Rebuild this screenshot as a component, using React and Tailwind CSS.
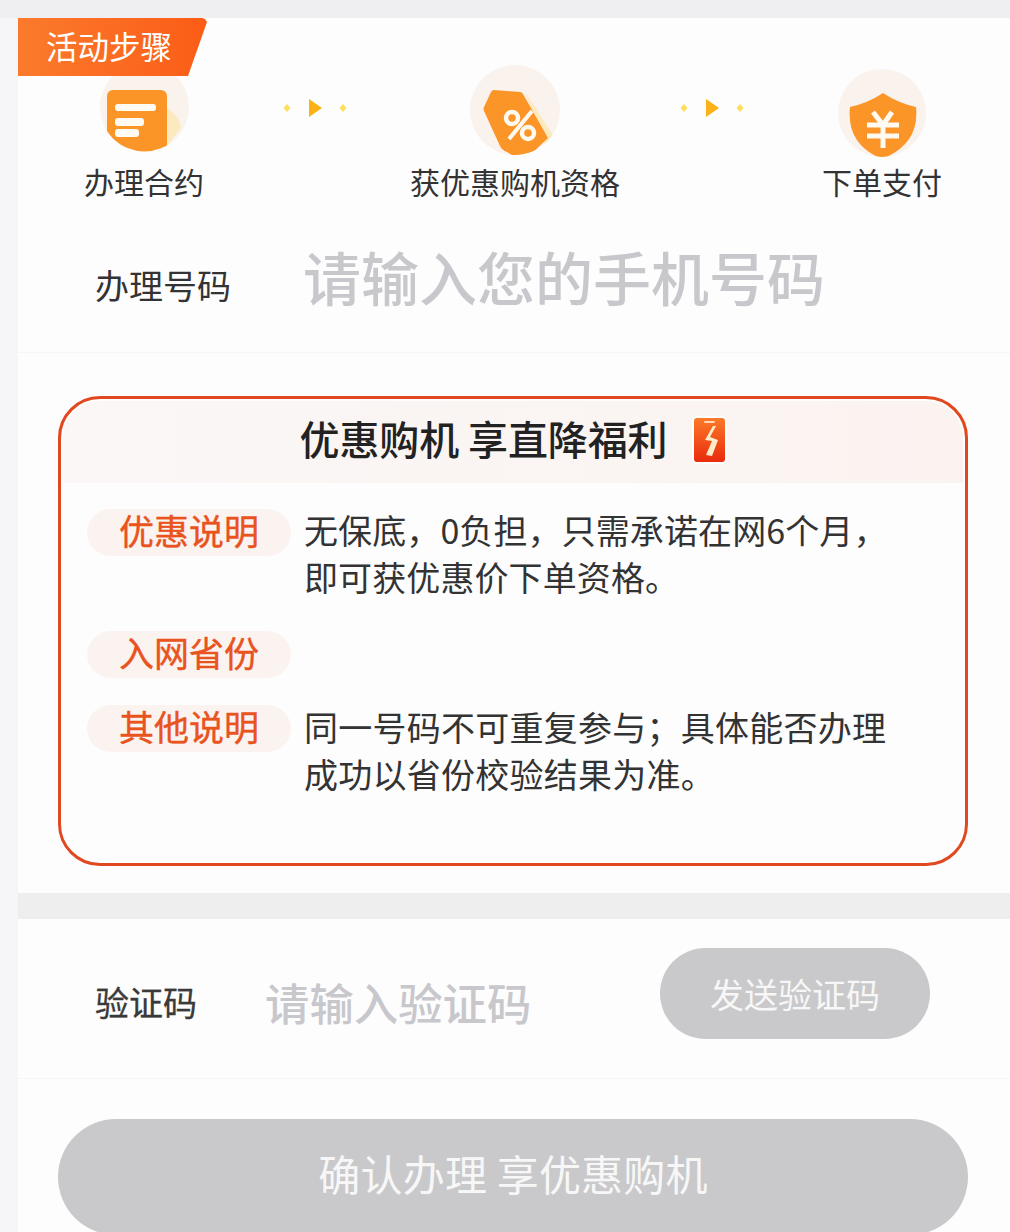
const FONT = "font-['Noto_Sans_CJK_SC','Noto_Sans',sans-serif]";

function DocIcon() {
  return (
    <svg width="100" height="99" viewBox="0 0 100 99">
      <defs>
        <clipPath id="c1"><circle cx="50.5" cy="45" r="44.5" /></clipPath>
      </defs>
      <circle cx="50.5" cy="45" r="44.5" fill="#faf3ed" />
      <g clipPath="url(#c1)">
        <path d="M73 46 Q86 54 87 66 L73 84 Z" fill="#fde9c0" />
        <rect x="13" y="28" width="60" height="80" rx="6" fill="#fb9527" />
        <rect x="21" y="42" width="41" height="7" rx="3" fill="#fffaf2" />
        <rect x="21" y="56" width="29" height="8" rx="3" fill="#fffaf2" />
        <rect x="21" y="67" width="24" height="8" rx="3" fill="#fffaf2" />
      </g>
    </svg>
  );
}

function TagIcon() {
  return (
    <svg width="100" height="99" viewBox="0 0 100 99">
      <defs>
        <clipPath id="c2"><circle cx="50" cy="48" r="45" /></clipPath>
      </defs>
      <circle cx="50" cy="48" r="45" fill="#faf3ed" />
      <g clipPath="url(#c2)">
        <path d="M60 30 L90 76 L80 84 Z" fill="#fde9c0" />
        <path d="M29 28 Q27 28 26 30 L19 45 Q18 47 19 49 L35 84 Q37 88 42 90 L58 100 L83 76 L58 32 Q57 30 55 30 Z" fill="#fb9527" />
      </g>
      <circle cx="47" cy="56" r="6" fill="none" stroke="#fffaf0" strokeWidth="4.5" />
      <circle cx="63" cy="71" r="6" fill="none" stroke="#fffaf0" strokeWidth="4.5" />
      <line x1="67" y1="49" x2="44" y2="77" stroke="#fffaf0" strokeWidth="4" />
    </svg>
  );
}

function ShieldIcon() {
  return (
    <svg width="100" height="99" viewBox="0 0 100 99">
      <defs>
        <clipPath id="c3"><circle cx="50" cy="51" r="44" /></clipPath>
      </defs>
      <circle cx="50" cy="51" r="44" fill="#faf3ed" />
      <g clipPath="url(#c3)">
        <path d="M51 31 Q36 41 18 45 Q14 82 50 97 Q88 82 84 45 Q66 41 51 31 Z" fill="#fb9527" />
      </g>
      <path d="M41 50 L51 63 L60 50 M51 63 V86 M35 63 H67 M35 74 H67" fill="none" stroke="#fffaf2" strokeWidth="5" />
    </svg>
  );
}

function Arrow({ className }) {
  return (
    <svg width="64" height="20" viewBox="0 0 64 20" className={className}>
      <path d="M4 6 L7.5 10 L4 14 L0.5 10 Z" fill="#fddf5e" />
      <path d="M26 1 L39 10 L26 19 Z" fill="#fcb116" />
      <path d="M60 6 L63.5 10 L60 14 L56.5 10 Z" fill="#fddf5e" />
    </svg>
  );
}

function Bolt() {
  return (
    <svg width="35" height="48" viewBox="0 0 35 48" className="shrink-0 mt-[4px]">
      <defs>
        <linearGradient id="bg" x1="0" y1="0" x2="0" y2="1">
          <stop offset="0" stopColor="#fb7a28" />
          <stop offset="1" stopColor="#ea2a0c" />
        </linearGradient>
      </defs>
      <rect x="0" y="0" width="35" height="48" rx="5" fill="#fff" />
      <rect x="2" y="2" width="31" height="44" rx="3" fill="url(#bg)" />
      <rect x="12" y="5" width="11" height="2" rx="1" fill="#ffd9b8" />
      <path d="M21 10 L13 24 L20 25 L14 39 L20 40 L26 24 L18 21 L24 10 Z" fill="#ffeccb" />
    </svg>
  );
}

function Pill({ children }) {
  return (
    <div className="h-[47px] w-[204px] rounded-full bg-[#fbf3f0] flex items-center justify-center pb-[7px] text-[35px] leading-[47px] text-[#e9531d] [-webkit-text-stroke:0.4px_#e9531d]">
      {children}
    </div>
  );
}

function Step({ icon, label, width }) {
  return (
    <div className={`flex flex-col items-center shrink-0 ${width}`}>
      {icon}
      <div className="text-[30px] leading-[40px] text-[#333333] whitespace-nowrap">{label}</div>
    </div>
  );
}

export default function App() {
  return (
    <div className={`${FONT} w-[1010px] h-[1232px] overflow-hidden bg-[#f6f6f8]`}>
      <div className="h-[18px] bg-[#efeff1]" />
      <div className="pl-[18px]">
        <section className="relative h-[875px] bg-[#fefdfe]">
          <div className="absolute left-0 top-0 w-[189px] h-[58px] pl-[28px] pb-[2px] flex items-center text-[31.5px] text-white leading-none whitespace-nowrap bg-gradient-to-r from-[#fb7a2c] to-[#fb5c16] [clip-path:polygon(0_0,184px_0,187px_1px,189px_4px,170px_58px,0_58px)]">
            活动步骤
          </div>

          <div className="flex items-start pt-[44px] pl-[66px]">
            <Step icon={<DocIcon />} label="办理合约" width="w-[120px]" />
            <Arrow className="mt-[36px] ml-[79px]" />
            <Step icon={<TagIcon />} label="获优惠购机资格" width="w-[210px] ml-[63px]" />
            <Arrow className="mt-[36px] ml-[60px]" />
            <Step icon={<ShieldIcon />} label="下单支付" width="w-[120px] ml-[78px]" />
          </div>

          <div className="flex items-start h-[152px] pl-[77px] border-b border-[#f6f5f7] whitespace-nowrap">
            <div className="mt-[64px] text-[34px] leading-[40px] text-[#333333]">办理号码</div>
            <div className="mt-[40px] ml-[72px] text-[58px] leading-[70px] font-medium text-[#c8c8cc]">请输入您的手机号码</div>
          </div>

          <div className="ml-[40px] mt-[43px] w-[910px] h-[470px] rounded-[42px] border-[3px] border-[#e0491f] p-[2px]">
            <div className="h-[82px] rounded-t-[36px] bg-gradient-to-r from-[#faf7f6] to-[#fbf3f0] flex items-center justify-center gap-[24px] pb-[8px] text-[40px] leading-none font-medium text-[#222222] whitespace-nowrap">
              <span className="tracking-[-0.1px]">优惠购机 享直降福利</span>
              <Bolt />
            </div>
            <div className="grid grid-cols-[204px_1fr] gap-x-[13px] pl-[24px] pt-[26px] text-[34px] leading-[47px] text-[#333333]">
              <Pill>优惠说明</Pill>
              <div className="-mt-[3px] mb-[3px] whitespace-nowrap tracking-[0.1px]">
                无保底，0负担，只需承诺在网6个月，
                <br />
                即可获优惠价下单资格。
              </div>
              <div className="mt-[28px]"><Pill>入网省份</Pill></div>
              <div className="mt-[28px]" />
              <div className="mt-[27px]"><Pill>其他说明</Pill></div>
              <div className="mt-[25px] whitespace-nowrap tracking-[0.25px]">
                同一号码不可重复参与；具体能否办理
                <br />
                成功以省份校验结果为准。
              </div>
            </div>
          </div>
        </section>

        <div className="h-[26px] bg-[#eeeeef]" />

        <section className="h-[400px] bg-[#fefdfe]">
          <div className="flex items-start h-[160px] pt-[29px] pl-[77px] border-b border-[#f6f5f7] whitespace-nowrap">
            <div className="mt-[34px] text-[34px] leading-[40px] text-[#3a3a3a] [-webkit-text-stroke:0.3px_#3a3a3a]">验证码</div>
            <div className="mt-[24px] ml-[68px] text-[44.4px] leading-[60px] font-medium text-[#c8c8cc]">请输入验证码</div>
            <button className="ml-auto mr-[80px] w-[270px] h-[91px] rounded-full bg-[#c9c9cb] text-[34px] leading-none text-[#f7f7f7]">
              发送验证码
            </button>
          </div>
          <button className="block ml-[40px] mt-[40px] w-[910px] h-[116px] rounded-full bg-[#c9c9cb] text-[42px] leading-none tracking-[0.2px] text-[#f7f7f7] pb-[8px]">
            确认办理 享优惠购机
          </button>
        </section>
      </div>
    </div>
  );
}
